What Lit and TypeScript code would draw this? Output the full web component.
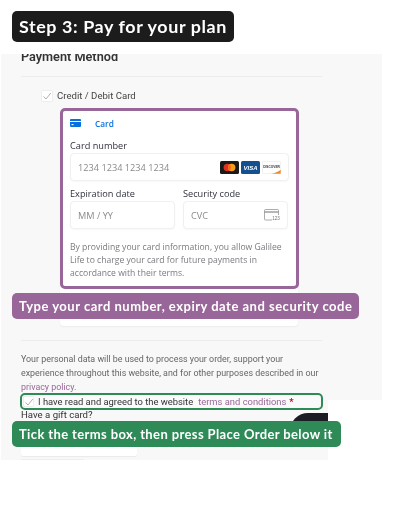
import { LitElement, html, css } from "lit";
import { customElement } from "lit/decorators.js";

const check = html`<svg class="tick" viewBox="0 0 12 12" width="12" height="12" fill="none" stroke="#9a9a9a" stroke-width="0.8"><path d="M2.5 6.5 L5 9 L9.8 3"/></svg>`;

@customElement("app-root")
export class AppRoot extends LitElement {
  static styles = css`
    :host { display: block; position: relative; width: 406px; height: 514px; background: #fff; overflow: hidden; font-family: Roboto, "Liberation Sans", sans-serif; color: #333; filter: blur(0.3px); }
    .label { position: absolute; left: 12px; border-radius: 5px; color: #fff; font-family: Lato, sans-serif; font-weight: 700; white-space: nowrap; display: flex; align-items: center; padding: 0 7px; box-sizing: border-box; letter-spacing: 0.5px; z-index: 3; }
    .title { top: 10.5px; width: 222px; height: 31px; background: #1c1c1c; font-size: 17.9px; letter-spacing: 0.6px; }
    .tip { font-size: 13px; height: 25.5px; }
    .tip-purple { top: 293px; width: 347px; background: #996699; }
    .tip-green { top: 421px; width: 329px; background: #2e8b57; letter-spacing: 0.38px; }

    .top { margin: 54px 0 0 1px; width: 381px; height: 346px; background: #f8f8f8; overflow: hidden; box-sizing: border-box; padding: 0 60px 0 20px; position: relative; }
    h2 { margin: -5px 0 0; font: 600 12.7px/16px Roboto, sans-serif; color: #333; height: 16px; }
    hr { border: 0; border-top: 1px solid #ececec; margin: 0; }
    .rule1 { margin-top: 11px; }
    .method { display: flex; align-items: center; gap: 4px; margin: 13px 0 0 20px; font: 400 9.6px/12px Roboto, sans-serif; color: #444; }
    .box { width: 12px; height: 12px; background: #fff; border: 1px solid #eee; box-sizing: border-box; border-radius: 1px; display: flex; align-items: center; justify-content: center; flex: none; }
    .tick { flex: none; }

    .cardwrap { margin: 6px 0 0 39px; width: 238px; height: 218px; position: relative; background: #fff; border-radius: 4px; box-shadow: 0 1px 2px rgba(0,0,0,.05); }
    .card { box-sizing: border-box; width: 239px; height: 181px; border: 3px solid #996699; border-radius: 5px; background: #fff; padding: 0 7px; font-family: "Open Sans", sans-serif; }
    .tab { display: flex; align-items: center; height: 24px; color: #0570de; font-size: 8.3px; font-weight: 600; gap: 14px; }
    .tab svg { flex: none; }
    .f { font-size: 9.2px; line-height: 12px; color: #30313d; }
    .cardnum { margin-top: 5px; }
    .input { box-sizing: border-box; background: #fff; border: 1px solid #f0f0f0; border-radius: 4px; height: 28px; margin-top: 1px; display: flex; align-items: center; justify-content: space-between; padding: 0 7px; color: #8a8a8a; font-size: 9.2px; box-shadow: 0 1px 2px rgba(0,0,0,.03); }
    .brands { display: flex; gap: 2px; margin-right: 0; }
    .row { display: grid; grid-template-columns: 105px 105px; gap: 8px; margin-top: 7px; }
    .legal { margin: 12px 0 0; color: #7a7a80; font-size: 8.6px; line-height: 13px; }

    .rule2 { margin-top: 14px; }
    .personal { margin: 11px 0 0; font: 400 8.88px/14.2px Roboto, sans-serif; color: #666; white-space: nowrap; }
    .personal a, .terms { color: #996699; }

    .consent { position: absolute; left: 20px; top: 393px; width: 303px; height: 17px; box-sizing: border-box; border: 2px solid #2e8b57; border-radius: 5px; display: flex; align-items: center; padding-left: 1px; gap: 4px; font: 400 9.4px/12px Roboto, sans-serif; color: #333; white-space: nowrap; z-index: 2; background: #fafafa; }
    .consent .box { width: 11px; height: 11px; }
    .consent .terms { margin-left: 1px; }
    .req { color: #c00; font-weight: 700; margin-left: -1px; }

    .bottom { margin-left: 1px; width: 327px; height: 60px; background: #f8f8f8; overflow: hidden; position: relative; box-sizing: border-box; padding: 9px 0 0 20px; display: flex; flex-direction: column; }
    .gift { font: 400 9.6px/12px Roboto, sans-serif; color: #333; }
    .order { position: absolute; left: 289px; top: 13px; width: 60px; height: 30px; border-radius: 18px 0 0 0; background: #1c1c24; }
    .in1 { margin-top: 19px; width: 116px; height: 16px; background: #fff; border-radius: 2px; box-shadow: 0 1px 1px rgba(0,0,0,.06); flex: none; }
    .in2 { margin-top: 3px; width: 63px; height: 12px; background: #fff; border: 1px solid #eee; box-sizing: border-box; flex: none; }
  `;

  render() {
    return html`
      <div class="label title">Step 3: Pay for your plan</div>
      <div class="top">
        <h2>Payment Method</h2>
        <hr class="rule1" />
        <div class="method"><span class="box">${check}</span>Credit / Debit Card</div>
        <div class="cardwrap">
          <div class="card">
            <div class="tab">
              <svg width="11" height="8" viewBox="0 0 11 8"><path d="M1 0h9a1 1 0 0 1 1 1v1H0V1a1 1 0 0 1 1-1z" fill="#0570de"/><path d="M0 3h11v4a1 1 0 0 1-1 1H1a1 1 0 0 1-1-1z" fill="#0570de"/><rect x="1.5" y="5" width="2" height="1.2" fill="#fff"/></svg>
              <span>Card</span>
            </div>
            <div class="f cardnum">Card number</div>
            <div class="input">
              <span>1234 1234 1234 1234</span>
              <span class="brands">
                <svg width="19" height="13" viewBox="0 0 19 13"><rect width="19" height="13" rx="1.5" fill="#1a1a1a"/><circle cx="7.3" cy="6.5" r="3.7" fill="#e0301e"/><circle cx="11.7" cy="6.5" r="3.7" fill="#f79e1b"/><path d="M9.5 3.5a3.7 3.7 0 0 1 0 6a3.7 3.7 0 0 1 0-6z" fill="#f26a1b"/></svg>
                <svg width="19" height="13" viewBox="0 0 19 13"><rect width="19" height="13" rx="1.5" fill="#14508f"/><text x="9.5" y="9" text-anchor="middle" font-family="Liberation Sans" font-size="6" font-weight="700" font-style="italic" fill="#fff">VISA</text></svg>
                <svg width="19" height="13" viewBox="0 0 19 13"><rect x=".25" y=".25" width="18.5" height="12.5" rx="1.5" fill="#fff" stroke="#ddd" stroke-width=".5"/><text x="9.5" y="7.4" text-anchor="middle" font-family="Liberation Sans" font-size="3.2" font-weight="700" fill="#333">DISCOVER</text><path d="M9 12.7c4-.6 7-2 9.7-4v3.5a.5.5 0 0 1-.5.5z" fill="#f08a24"/></svg>
              </span>
            </div>
            <div class="row">
              <div>
                <div class="f">Expiration date</div>
                <div class="input"><span>MM / YY</span></div>
              </div>
              <div>
                <div class="f">Security code</div>
                <div class="input">
                  <span>CVC</span>
                  <svg width="16" height="12" viewBox="0 0 16 12" fill="none" stroke="#888" stroke-width=".7"><path d="M8 11H1.5a1 1 0 0 1-1-1V1.5a1 1 0 0 1 1-1h12a1 1 0 0 1 1 1V6"/><path d="M.5 3h14" stroke-width="1.2"/><text x="15.8" y="11.2" text-anchor="end" font-family="Liberation Sans" font-size="4.6" fill="#777" stroke="none">123</text></svg>
                </div>
              </div>
            </div>
            <p class="legal">By providing your card information, you allow Galilee Life to charge your card for future payments in accordance with their terms.</p>
          </div>
        </div>
        <hr class="rule2" />
        <p class="personal">Your personal data will be used to process your order, support your<br />experience throughout this website, and for other purposes described in our<br /><a>privacy policy</a>.</p>
      </div>
      <div class="consent"><span class="box">${check}</span>I have read and agreed to the website <span class="terms">terms and conditions</span> <span class="req">*</span></div>
      <div class="bottom">
        <div class="gift">Have a gift card?</div>
        <div class="order"></div>
        <div class="in1"></div>
        <div class="in2"></div>
      </div>
      <div class="label tip tip-purple">Type your card number, expiry date and security code</div>
      <div class="label tip tip-green">Tick the terms box, then press Place Order below it</div>
    `;
  }
}
